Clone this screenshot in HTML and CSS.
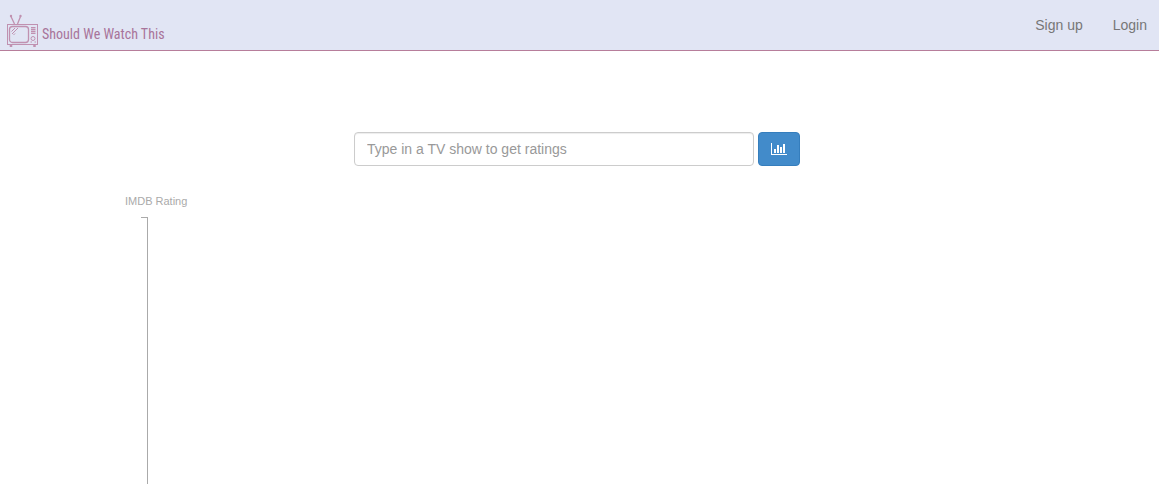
FILE: index.html
```html
<!DOCTYPE html>
<html lang="en">
<head>
<meta charset="utf-8">
<title>Should We Watch This</title>
<link rel="stylesheet" href="styles.css">
</head>
<body>
<header class="navbar">
  <a class="brand" href="#">
    <svg class="brand-icon" viewBox="0 0 32 34" width="32" height="34" fill="none" stroke="currentColor" aria-hidden="true">
      <path d="M4 2.500 7.500 10M13.500 2.500 10.500 10" stroke-width="1.300"/>
      <circle cx="4" cy="2" r="1.200" fill="currentColor" stroke="none"/>
      <circle cx="13.500" cy="2" r="1.200" fill="currentColor" stroke="none"/>
      <rect x=".5" y="10.500" width="30" height="20"/>
      <rect x="2.500" y="12.500" width="19" height="16" rx="3" stroke-width="1.300"/>
      <path d="M4.500 17.500 8 14M5 20l6-6M6.500 21l1.500-1.500"/>
      <path d="M24 13.500h4.500M24 15.500h4.500M24 17.500h4.500M24 19.500h4.500"/>
      <path d="M24 14.500h4.500M24 16.500h4.500M24 18.500h4.500" opacity=".4"/>
      <circle cx="26" cy="24.500" r="2"/>
      <path d="M23.500 28h1.500M27.500 28h1.500"/>
      <path d="M4 31v2M27.500 31v2" stroke-width="2.500"/>
    </svg>
    <span class="brand-name">Should We Watch This</span>
  </a>
  <nav class="nav-links">
    <a href="#">Sign up</a>
    <a href="#">Login</a>
  </nav>
</header>
<main class="content">
  <form class="search">
    <input class="search-input" type="text" placeholder="Type in a TV show to get ratings" aria-label="TV show">
    <button class="search-button" type="button" aria-label="Get ratings">
      <svg viewBox="0 0 16 14" width="16" height="14" fill="currentColor" aria-hidden="true">
        <path d="M0 1h1v11h15v1H0zM3 7h2v4H3zM6 3h2v8H6zM9 5h2v6H9zM12 2h2v9h-2z"/>
      </svg>
    </button>
  </form>
  <section class="chart">
    <div class="axis-label">IMDB Rating</div>
    <div class="axis"></div>
  </section>
</main>
</body>
</html>
```
FILE: styles.css
```css
* {
  box-sizing: border-box;
}

body {
  display: flex;
  flex-direction: column;
  min-height: 100vh;
  margin: 0;
  background: #fff;
  font: 14px/20px "Helvetica Neue", Helvetica, "Liberation Sans", Arial, sans-serif;
}

.navbar {
  display: flex;
  justify-content: space-between;
  height: 51px;
  padding: 0 12px 0 7px;
  background: #e1e5f4;
  border-bottom: 1px solid #b77e9b;
}

.brand {
  display: flex;
  gap: 3px;
  padding-top: 14px;
  color: #a8749a;
  text-decoration: none;
}

.brand-icon {
  color: #c091b0;
}

.brand-name {
  padding-top: 10px;
  font-family: "Roboto Condensed", "Liberation Sans Narrow", "Liberation Sans", sans-serif;
  font-size: 14px;
}

.nav-links {
  display: flex;
  gap: 30px;
  padding-top: 15px;
}

.nav-links a {
  color: #777;
  text-decoration: none;
}

.content {
  display: flex;
  flex: 1;
  flex-direction: column;
  padding-top: 81px;
}

.search {
  display: flex;
  justify-content: center;
  gap: 4px;
  padding-right: 5px;
}

.search-input {
  width: 400px;
  height: 34px;
  padding: 6px 12px;
  border: 1px solid #ccc;
  border-radius: 4px;
  box-shadow: inset 0 1px 1px rgba(0, 0, 0, .075);
  color: #555;
  font: inherit;
}

.search-input::placeholder {
  color: #999;
}

.search-button {
  display: flex;
  align-items: center;
  justify-content: center;
  width: 42px;
  height: 34px;
  padding: 0;
  border: 1px solid #357ebd;
  border-radius: 4px;
  background: #428bca;
  color: #fff;
}

.chart {
  display: flex;
  flex: 1;
  flex-direction: column;
  padding: 25px 0 0 125px;
}

.axis-label {
  margin-bottom: 6px;
  color: #aaa;
  font-size: 11px;
}

.axis {
  flex: 1;
  width: 7px;
  margin-left: 16px;
  border-top: 1px solid #aaa;
  border-right: 1px solid #aaa;
}
```
